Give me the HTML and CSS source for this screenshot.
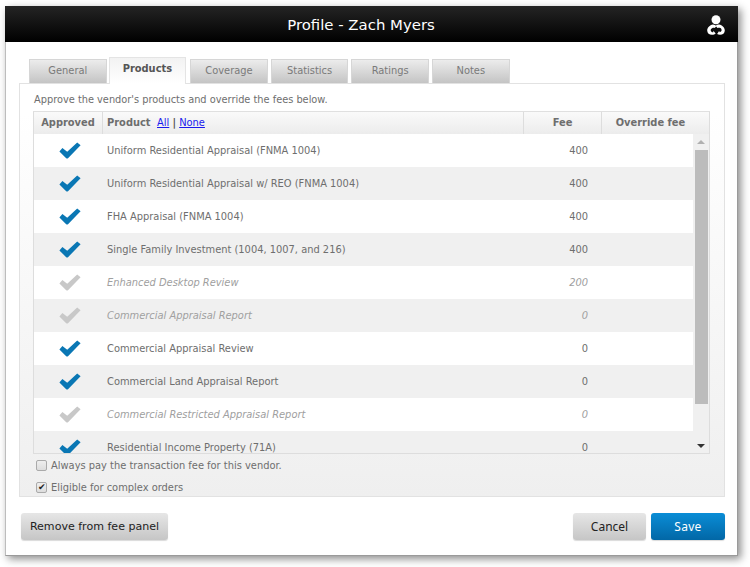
FILE: index.html
```html
<!DOCTYPE html>
<html lang="en">
<head>
<meta charset="utf-8">
<title>Profile - Zach Myers</title>
<link rel="stylesheet" href="styles.css">
</head>
<body>
<div class="window">
  <header class="titlebar">
    <h1>Profile - Zach Myers</h1>
    <svg class="logo" viewBox="0 0 18 20" aria-hidden="true">
      <circle cx="9" cy="4.7" r="4.5" fill="#fff"/>
      <path fill="#fff" d="M6 9.4C2.6 10 .2 12.6.2 15.4c0 2.6 2 4.4 4.8 4.4 1.6 0 2.8-.5 3.7-1.4L6.3 15.8v1.4c-2.6.2-3.6-2.8-1.2-4 1-.5 1.9-.5 2.6-.2L9.6 11C8.6 10 7.2 9.5 6 9.4zM12 9.4c3.4.6 5.8 3.2 5.8 6 0 2.6-2 4.4-4.8 4.4-1.2 0-2.1-.2-2.9-.7l2-3 .7 1.1c2.6-.6 2.2-3.9-.1-4.4-.8-.2-1.6-.1-2.3.2L8.6 10.5c1-.7 2.2-1.1 3.4-1.1z"/>
    </svg>
  </header>
  <div class="content">
    <nav class="tabs">
      <a class="tab">General</a>
      <a class="tab active">Products</a>
      <a class="tab">Coverage</a>
      <a class="tab">Statistics</a>
      <a class="tab">Ratings</a>
      <a class="tab">Notes</a>
    </nav>
    <section class="panel">
      <p class="intro">Approve the vendor's products and override the fees below.</p>
      <div class="grid">
        <div class="head">
          <div class="h-approved">Approved</div>
          <div class="h-product">Product <span class="links"><a href="#">All</a> <b>|</b> <a href="#">None</a></span></div>
          <div class="h-fee">Fee</div>
          <div class="h-override">Override fee</div>
        </div>
        <div class="body">
          <div class="rows">
            <div class="row"><svg class="check"><use href="#tick"/></svg><span class="name">Uniform Residential Appraisal (FNMA 1004)</span><span class="fee">400</span></div>
            <div class="row alt"><svg class="check"><use href="#tick"/></svg><span class="name">Uniform Residential Appraisal w/ REO (FNMA 1004)</span><span class="fee">400</span></div>
            <div class="row"><svg class="check"><use href="#tick"/></svg><span class="name">FHA Appraisal (FNMA 1004)</span><span class="fee">400</span></div>
            <div class="row alt"><svg class="check"><use href="#tick"/></svg><span class="name">Single Family Investment (1004, 1007, and 216)</span><span class="fee">400</span></div>
            <div class="row off"><svg class="check"><use href="#tick"/></svg><span class="name">Enhanced Desktop Review</span><span class="fee">200</span></div>
            <div class="row alt off"><svg class="check"><use href="#tick"/></svg><span class="name">Commercial Appraisal Report</span><span class="fee">0</span></div>
            <div class="row"><svg class="check"><use href="#tick"/></svg><span class="name">Commercial Appraisal Review</span><span class="fee">0</span></div>
            <div class="row alt"><svg class="check"><use href="#tick"/></svg><span class="name">Commercial Land Appraisal Report</span><span class="fee">0</span></div>
            <div class="row off"><svg class="check"><use href="#tick"/></svg><span class="name">Commercial Restricted Appraisal Report</span><span class="fee">0</span></div>
            <div class="row alt"><svg class="check"><use href="#tick"/></svg><span class="name">Residential Income Property (71A)</span><span class="fee">0</span></div>
          </div>
          <div class="scrollbar">
            <span class="arrow up"></span>
            <span class="thumb"></span>
            <span class="arrow down"></span>
          </div>
        </div>
      </div>
      <label class="opt first"><input type="checkbox"> Always pay the transaction fee for this vendor.</label>
      <label class="opt"><input type="checkbox" checked> Eligible for complex orders</label>
    </section>
    <footer class="actions">
      <button class="btn">Remove from fee panel</button>
      <span class="right">
        <button class="btn small">Cancel</button>
        <button class="btn small primary">Save</button>
      </span>
    </footer>
  </div>
</div>
<svg class="defs" width="0" height="0" aria-hidden="true">
  <symbol id="tick" viewBox="0 0 22 17">
    <path d="M.4 9.4 3.4 6 8.2 9.8 18.2.4 21.6 3.2 9 16.2Q8.2 17 7.2 16.2Z"/>
  </symbol>
</svg>
</body>
</html>
```
FILE: styles.css
```css
* { box-sizing: border-box; }
html, body { margin: 0; background: #fff; }
body { width: 750px; height: 567px; overflow: hidden; padding: 6px 0 0 5px; font-family: "DejaVu Sans", Verdana, sans-serif; font-size: 9.9px; color: #6e6e6e; }
.window { width: 733px; height: 550px; background: #fff; border: 1px solid #bdbdbd; border-top: 0; border-right-color: #9a9a9a; border-bottom-color: #9a9a9a; box-shadow: 3px 3px 8px rgba(0,0,0,.45); }
.titlebar { height: 36px; margin: 0 -1px; padding: 1px 21px 0 0; background: linear-gradient(#242424, #000); display: flex; align-items: center; justify-content: center; position: relative; }
.titlebar h1 { margin: 0; font-size: 14.9px; font-weight: 400; color: #fff; }
.logo { position: absolute; right: 13px; top: 9px; width: 18px; height: 20px; }
.content { padding: 15px 12px 0 13px; }
.tabs { display: flex; gap: 3px; padding-left: 10px; height: 26px; align-items: flex-end; position: relative; z-index: 1; }
.tab { width: 77.6px; height: 24px; background: linear-gradient(#ececec, #c4c4c4); border: 1px solid #d6d6d6; border-bottom: 0; text-align: center; line-height: 21px; color: #7a7a7a; }
.tab.active { margin-left: -1px; margin-right: 1px; background: linear-gradient(#f2f2f2, #fff); border-color: #e4e4e4; color: #555; font-weight: 700; line-height: 22px; margin-bottom: -1px; height: 27px; }
.panel { height: 414px; padding: 9px 13px 0 13px; border: 1px solid #e2e2e2; background: linear-gradient(#fff 0, #fff 30px, #efefef 100%); }
.intro { margin: 0 0 5px 1px; height: 13px; line-height: 13px; font-size: 9.8px; }
.grid { width: 677px; height: 343px; border: 1px solid #ddd; border-top: 1px solid #e0e0e0; overflow: hidden; background: #f0f0f0; }
.head { height: 22px; display: flex; background: linear-gradient(#fafafa, #ececec); font-weight: 700; line-height: 22px; color: #6e6e6e; }
.h-approved { width: 69px; text-align: center; border-right: 1px solid #ddd; }
.h-product { width: 421px; padding-left: 4px; border-right: 1px solid #ddd; }
.links { font-weight: 400; margin-left: 3px; color: #555; }
.links a { color: #1a1aee; }
.h-fee { width: 78px; text-align: center; border-right: 1px solid #ddd; }
.h-override { flex: 1; text-align: center; padding-right: 10px; }
.body { display: flex; height: 320px; }
.rows { width: 659px; height: 320px; overflow: hidden; }
.row { height: 33px; display: flex; align-items: center; background: #fff; }
.row.alt { background: #f0f0f0; }
.check { width: 22px; height: 17px; margin-left: 25px; fill: #0a77b4; flex: none; }
.row.off .check { fill: #c8c8c8; }
.name { margin-left: 26px; width: 412px; white-space: nowrap; }
.fee { width: 69px; text-align: right; }
.row.off .name, .row.off .fee { font-style: italic; color: #a0a0a0; }
.scrollbar { flex: 1; height: 320px; position: relative; background: #f0f0f0; }
.thumb { position: absolute; top: 16px; left: 2px; width: 13px; height: 254px; background: #bcbcbc; }
.arrow { position: absolute; left: 4px; width: 0; height: 0; border: 4px solid transparent; }
.arrow.up { top: 6px; border-top: 0; border-bottom: 4px solid #b0b0b0; }
.arrow.down { bottom: 6px; border-bottom: 0; border-top: 4px solid #333; }
.opt { display: flex; align-items: center; height: 14px; color: #6e6e6e; }
.opt.first { margin-top: 4px; margin-bottom: 8px; }
.opt input { appearance: none; width: 11px; height: 11px; margin: 0 4px 0 3px; background: linear-gradient(#eee, #ddd); border: 1px solid #aaa; border-radius: 2px; position: relative; }
.opt input:checked::after { content: "\2714"; position: absolute; left: 1px; top: -1px; font-size: 9px; line-height: 11px; color: #222; }
.actions { display: flex; justify-content: space-between; padding: 16px 0 0 2px; }
.btn { height: 27px; width: 147px; padding: 0; border: 0; border-radius: 3px; background: linear-gradient(#e6e6e6, #c6c6c6); color: #222; font-family: "DejaVu Sans", sans-serif; font-size: 11.05px; box-shadow: 0 1px 1px rgba(0,0,0,.15); }
.btn.small { width: 73px; font-family: "Noto Sans", sans-serif; font-size: 12px; }
.right { display: flex; gap: 5px; }
.btn.small.primary { width: 74px; background: linear-gradient(#0a8dd6, #0267a6); color: #fff; letter-spacing: .3px; }
.defs { position: absolute; }
```
